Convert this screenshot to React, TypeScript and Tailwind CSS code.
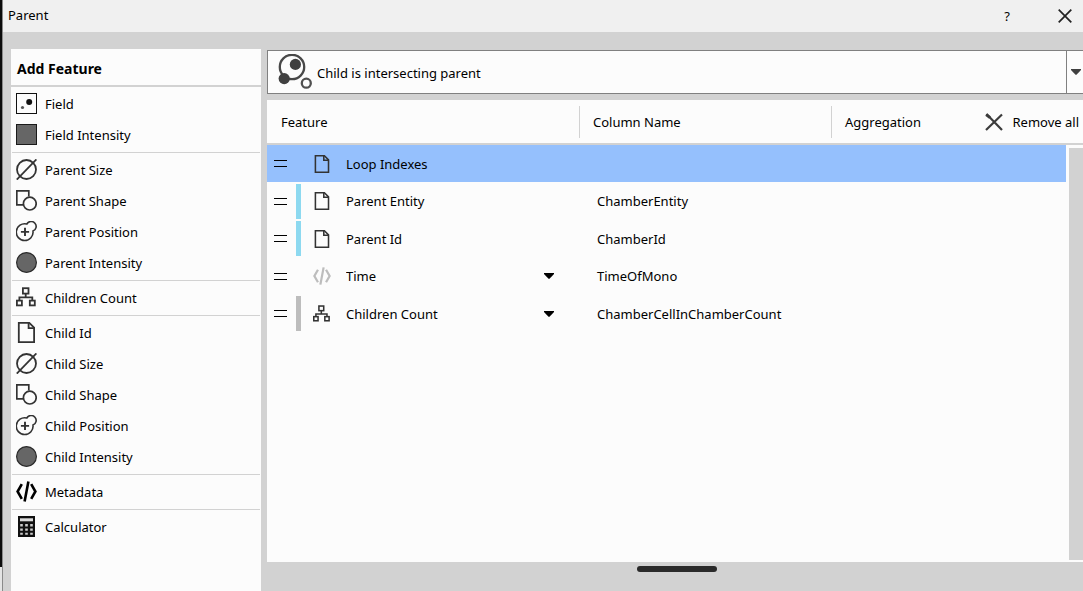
import type { ReactNode } from "react";

type IconProps = { className?: string };

function FieldIcon({ className }: IconProps) {
  return (
    <svg viewBox="0 0 21 21" className={className} aria-hidden="true">
      <rect x="0.5" y="0.5" width="20" height="20" fill="#fcfcfc" stroke="#111" />
      <circle cx="13.2" cy="9" r="3" fill="#111" />
      <circle cx="6.5" cy="14.5" r="1.6" fill="#555" />
    </svg>
  );
}

function SquareIcon({ className }: IconProps) {
  return (
    <svg viewBox="0 0 21 21" className={className} aria-hidden="true">
      <rect x="0.5" y="0.5" width="20" height="20" fill="#666" stroke="#1a1a1a" />
    </svg>
  );
}

function SizeIcon({ className }: IconProps) {
  return (
    <svg viewBox="0 0 21 21" className={className} fill="none" stroke="#333" strokeWidth="1.8" aria-hidden="true">
      <circle cx="10.5" cy="10.5" r="9.5" />
      <path d="M0.8 20.6 20.4 0.4" />
    </svg>
  );
}

function ShapeIcon({ className }: IconProps) {
  return (
    <svg viewBox="0 0 21 21" className={className} fill="none" stroke="#333" strokeWidth="1.7" aria-hidden="true">
      <path d="M7 14.8H0.8V0.8H12.8V6.5" />
      <circle cx="13.8" cy="13.6" r="6.4" />
    </svg>
  );
}

function PositionIcon({ className }: IconProps) {
  return (
    <svg viewBox="0 0 21 21" className={className} fill="none" stroke="#333" strokeWidth="1.6" aria-hidden="true">
      <path d="M10.8 3A8.4 8.4 0 1 0 17 10.1A5 5 0 1 0 10.8 3Z" />
      <path d="M9 6.8V15M4.9 10.9H13.1" strokeWidth="1.9" />
    </svg>
  );
}

function CircleIcon({ className }: IconProps) {
  return (
    <svg viewBox="0 0 21 21" className={className} aria-hidden="true">
      <circle cx="10.5" cy="10.5" r="9.9" fill="#666" stroke="#2a2a2a" strokeWidth="1.2" />
    </svg>
  );
}

function TreeIcon({ className }: IconProps) {
  return (
    <svg viewBox="0 0 21 21" className={className} fill="none" stroke="#333" strokeWidth="1.8" aria-hidden="true">
      <rect x="6.9" y="1.2" width="5.6" height="5.4" />
      <rect x="0.9" y="13.6" width="5" height="4.8" />
      <rect x="13.8" y="13.6" width="5" height="4.8" />
      <path d="M9.7 6.6V10.4M3.4 13.6V10.4H16.3V13.6" />
    </svg>
  );
}

function PageIcon({ className }: IconProps) {
  return (
    <svg viewBox="0 0 21 21" className={className} fill="none" stroke="#333" strokeWidth="1.8" aria-hidden="true">
      <path d="M2.8 0.9H13.3L18.1 5.7V20.1H2.8Z" />
      <path d="M12.6 0.9V6.2H18.1" />
    </svg>
  );
}

function CodeIcon({ className }: IconProps) {
  return (
    <svg viewBox="0 0 21 21" className={className} fill="none" stroke="currentColor" strokeWidth="2.6" aria-hidden="true">
      <path d="M5.8 3.2 1.6 10.5 5.8 17.8M15.2 3.2 19.4 10.5 15.2 17.8M12.4 0.4 8.6 20.6" />
    </svg>
  );
}

function CalculatorIcon({ className }: IconProps) {
  return (
    <svg viewBox="0 0 21 21" className={className} aria-hidden="true">
      <rect x="2" y="0" width="17" height="21" fill="#111" />
      <rect x="4" y="2.3" width="13" height="3" fill="#ddd" />
      <path
        d="M4.2 8h2.6v2.4h-2.6zM9.2 8h2.6v2.4h-2.6zM14.2 8h2.6v2.4h-2.6zM4.2 12.4h2.6v2.4h-2.6zM9.2 12.4h2.6v2.4h-2.6zM14.2 12.4h2.6v2.4h-2.6zM4.2 16.8h2.6v2h-2.6zM9.2 16.8h2.6v2h-2.6zM14.2 16.8h2.6v2h-2.6z"
        fill="#ccc"
      />
    </svg>
  );
}

function IntersectIcon({ className }: IconProps) {
  return (
    <svg viewBox="0 0 34 36" className={className} aria-hidden="true">
      <circle cx="14" cy="13" r="12.2" fill="none" stroke="#484848" strokeWidth="2.3" />
      <circle cx="17.4" cy="10.4" r="5.6" fill="#404040" />
      <circle cx="6.2" cy="24.6" r="5.6" fill="#404040" />
      <circle cx="28.3" cy="29.2" r="4.5" fill="none" stroke="#505050" strokeWidth="2.3" />
    </svg>
  );
}

function CrossIcon({ className }: IconProps) {
  return (
    <svg viewBox="0 0 18 18" className={className} fill="none" stroke="#3c3c3c" aria-hidden="true">
      <path d="M1.5 1 17 17M17 1.5 1 17" strokeWidth="2.2" />
      <path d="M1.2 1.6 5 4.6" strokeWidth="3" />
    </svg>
  );
}

function CloseIcon({ className }: IconProps) {
  return (
    <svg viewBox="0 0 14 14" className={className} fill="none" stroke="#222" strokeWidth="1.7" aria-hidden="true">
      <path d="M0.7 0.7 13.3 13.3M13.3 0.7 0.7 13.3" />
    </svg>
  );
}

function Caret({ className }: IconProps) {
  return (
    <svg viewBox="0 0 10 6" className={className} fill="currentColor" aria-hidden="true">
      <path d="M0 0H10V1L5.5 5.8H4.5L0 1Z" />
    </svg>
  );
}

type Feature = { label: string; icon: ReactNode };

const glyph = "size-[21px] shrink-0";

const groups: Feature[][] = [
  [
    { label: "Field", icon: <FieldIcon className={glyph} /> },
    { label: "Field Intensity", icon: <SquareIcon className={glyph} /> },
  ],
  [
    { label: "Parent Size", icon: <SizeIcon className={glyph} /> },
    { label: "Parent Shape", icon: <ShapeIcon className={glyph} /> },
    { label: "Parent Position", icon: <PositionIcon className={glyph} /> },
    { label: "Parent Intensity", icon: <CircleIcon className={glyph} /> },
  ],
  [{ label: "Children Count", icon: <TreeIcon className={glyph} /> }],
  [
    { label: "Child Id", icon: <PageIcon className={glyph} /> },
    { label: "Child Size", icon: <SizeIcon className={glyph} /> },
    { label: "Child Shape", icon: <ShapeIcon className={glyph} /> },
    { label: "Child Position", icon: <PositionIcon className={glyph} /> },
    { label: "Child Intensity", icon: <CircleIcon className={glyph} /> },
  ],
  [{ label: "Metadata", icon: <CodeIcon className={glyph} /> }],
  [{ label: "Calculator", icon: <CalculatorIcon className={glyph} /> }],
];

type Row = {
  name: string;
  column: string;
  icon: ReactNode;
  bar: string;
  menu?: boolean;
  selected?: boolean;
};

const small = "size-[18px] shrink-0";

const rows: Row[] = [
  { name: "Loop Indexes", column: "", icon: <PageIcon className={small} />, bar: "bg-transparent", selected: true },
  { name: "Parent Entity", column: "ChamberEntity", icon: <PageIcon className={small} />, bar: "bg-[#8dd9f0]" },
  { name: "Parent Id", column: "ChamberId", icon: <PageIcon className={small} />, bar: "bg-[#8dd9f0]" },
  {
    name: "Time",
    column: "TimeOfMono",
    icon: <CodeIcon className="size-[18px] shrink-0 text-[#bdbdbd]" />,
    bar: "bg-transparent",
    menu: true,
  },
  {
    name: "Children Count",
    column: "ChamberCellInChamberCount",
    icon: <TreeIcon className={small} />,
    bar: "bg-[#bdbdbd]",
    menu: true,
  },
];

function TitleBar() {
  return (
    <header className="flex h-8 shrink-0 items-center bg-[#f0f0f0] pr-[11px] pb-px pl-[5px]">
      <h1 className="flex-1 pb-0.5">Parent</h1>
      <button type="button" aria-label="Help" className="mr-12">
        ?
      </button>
      <button type="button" aria-label="Close">
        <CloseIcon className="size-3.5" />
      </button>
    </header>
  );
}

function Sidebar() {
  return (
    <aside className="flex w-[250px] shrink-0 flex-col bg-[#fcfcfc]">
      <h2 className="flex h-[38px] items-center border-b-2 border-[#d2d2d2] pt-1 pl-1.5 text-[14px] font-bold">
        Add Feature
      </h2>
      {groups.map((group, i) => (
        <ul key={i} className="mx-px border-b border-[#d2d2d2] pt-px pb-0.5 last:border-b-0">
          {group.map((f) => (
            <li key={f.label}>
              <button type="button" className="flex h-[31px] w-full items-center gap-2 pl-1 text-left">
                {f.icon}
                {f.label}
              </button>
            </li>
          ))}
        </ul>
      ))}
    </aside>
  );
}

function RelationSelect() {
  return (
    <div className="relative flex h-11 shrink-0 items-center border border-r-0 border-[#808080] bg-[#fcfcfc]">
      <IntersectIcon className="pointer-events-none absolute left-2.5 h-9 w-[34px]" />
      <select
        aria-label="Relation"
        className="h-full w-full appearance-none bg-transparent pt-0.5 pl-[49px] outline-none"
      >
        <option>Child is intersecting parent</option>
      </select>
      <span className="pointer-events-none absolute right-0 flex h-full w-[17px] items-center border-l border-[#808080] pl-1 text-[#404040]">
        <Caret className="h-[6px] w-[10px]" />
      </span>
    </div>
  );
}

function FeatureTable() {
  return (
    <div className="mt-1.5 grid min-h-0 flex-1 grid-cols-[minmax(0,1fr)_17px] grid-rows-[45px_minmax(0,1fr)] bg-[#fcfcfc]">
      <table className="contents">
        <thead className="col-span-2 block border-b-2 border-[#d2d2d2]">
          <tr className="flex h-[43px] items-center">
            <th className="flex h-8 w-[313px] items-center border-r border-[#d2d2d2] pl-3.5 font-normal">Feature</th>
            <th className="flex h-8 w-[252px] items-center border-r border-[#d2d2d2] pl-[13px] font-normal">
              Column Name
            </th>
            <th className="flex h-8 flex-1 items-center pl-[13px] font-normal">Aggregation</th>
            <td className="pr-1">
              <button type="button" className="flex items-center gap-2.5">
                <CrossIcon className="size-[18px]" />
                Remove all
              </button>
            </td>
          </tr>
        </thead>
        <tbody className="block">
          {rows.map((r) => (
            <tr
              key={r.name}
              className={
                r.selected
                  ? "flex bg-[#95c0fd] odd:h-[37px] even:h-[38px]"
                  : "flex odd:h-[37px] even:h-[38px]"
              }
            >
              <td className="flex w-[313px] items-center pl-[7px]">
                <button type="button" aria-label={"Move " + r.name} className="h-[7px] w-[13px] border-y border-black" />
                <span className={"ml-[9px] h-[35px] w-[5px] shrink-0 " + r.bar} />
                <span className="ml-3 flex">{r.icon}</span>
                {r.menu ? (
                  <span className="relative ml-[15px] flex w-[210px] items-center">
                    <select
                      aria-label={r.name + " feature"}
                      className="w-full appearance-none bg-transparent outline-none"
                    >
                      <option>{r.name}</option>
                    </select>
                    <Caret className="pointer-events-none absolute right-0.5 h-[6px] w-[10px]" />
                  </span>
                ) : (
                  <span className="ml-[15px]">{r.name}</span>
                )}
              </td>
              <td className="flex w-[252px] items-center pl-[17px]">{r.column}</td>
              <td className="flex-1" />
            </tr>
          ))}
        </tbody>
      </table>
      <div className="mt-[3px] mb-0.5 ml-[3px] bg-[#d2d2d2]" />
    </div>
  );
}

export default function App() {
  return (
    <div className="flex h-screen overflow-hidden bg-[#d2d2d2] font-['Noto_Sans',sans-serif] text-[13px] leading-5 text-black">
      <div className="flex w-[3px] shrink-0 flex-col border-r border-[#8a8a8a] bg-[#0c0c0c]">
        <span className="mt-auto h-6 bg-[#e4e4e4]" />
      </div>
      <div className="flex min-w-0 flex-1 flex-col">
        <TitleBar />
        <div className="flex min-h-0 flex-1 gap-1.5 pl-2">
          <div className="flex pt-[17px]">
            <Sidebar />
          </div>
          <main className="flex min-w-0 flex-1 flex-col pt-[18px]">
            <RelationSelect />
            <FeatureTable />
            <div className="flex h-[29px] shrink-0 justify-center pt-1 pl-1">
              <span className="h-1.5 w-20 rounded-full bg-[#2a2a2a]" />
            </div>
          </main>
        </div>
      </div>
    </div>
  );
}
